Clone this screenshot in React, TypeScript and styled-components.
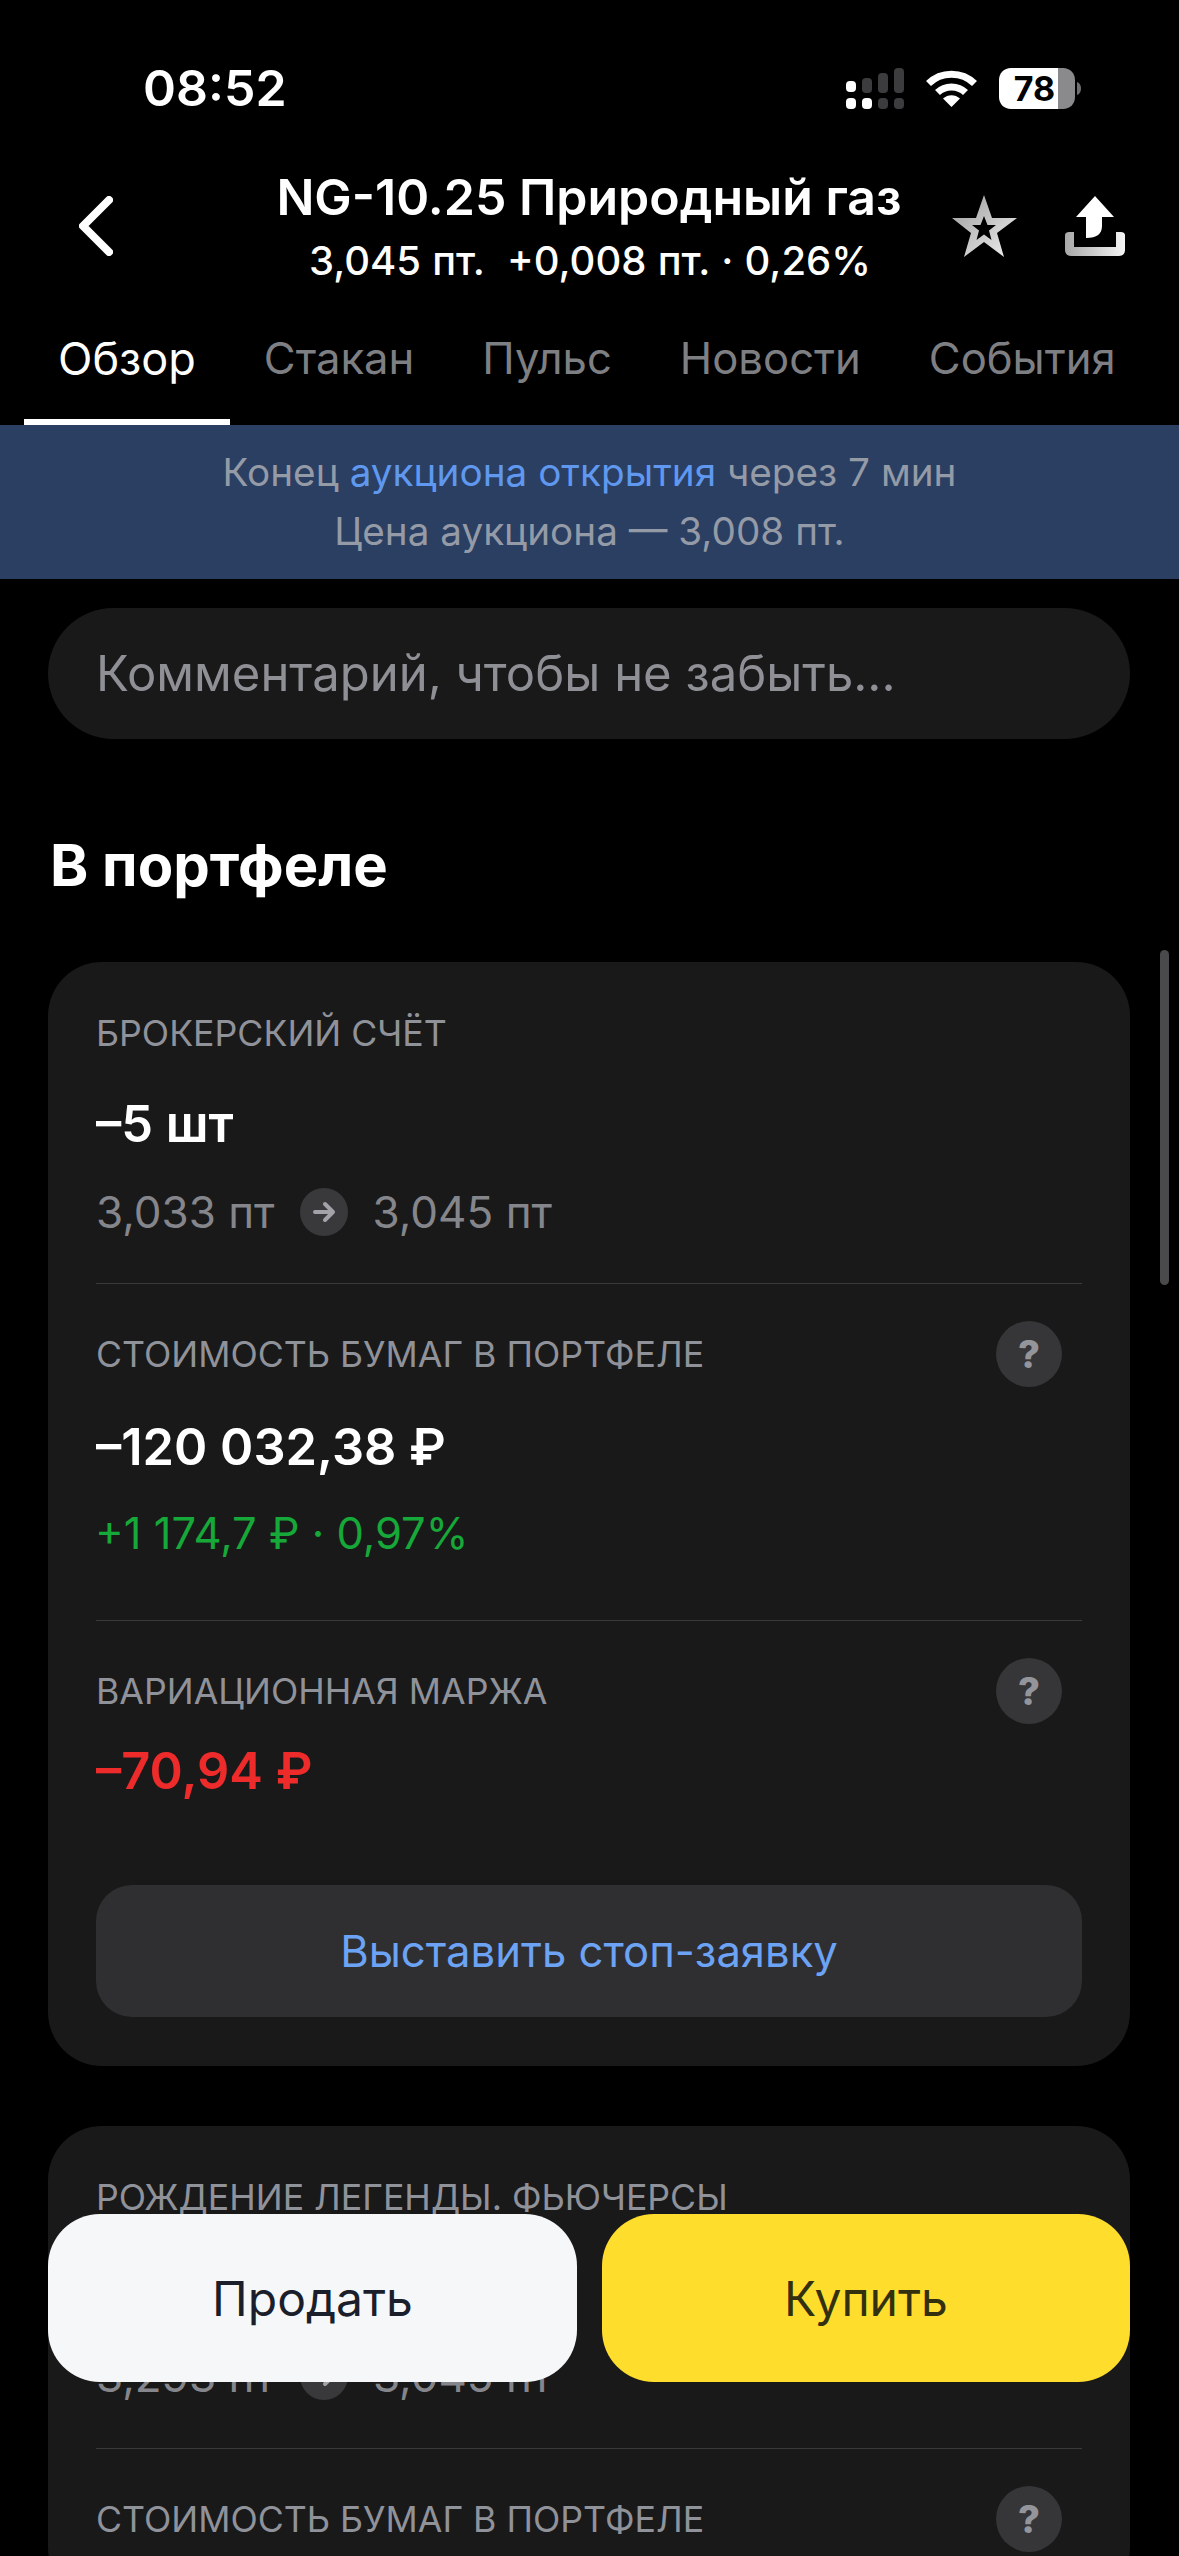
import React from "react";
import styled, { createGlobalStyle } from "styled-components";

const GlobalStyle = createGlobalStyle`
  html, body {
    margin: 0;
    padding: 0;
    background: #000;
  }
  * {
    box-sizing: border-box;
  }
`;

const Screen = styled.div`
  position: relative;
  width: 1179px;
  height: 2556px;
  overflow: hidden;
  background: #000;
  color: #fff;
  font-family: Inter, "Noto Sans", sans-serif;
`;

const StatusBar = styled.div`
  height: 148px;
  padding: 28px 98px 0 143px;
  display: flex;
  align-items: center;
  justify-content: space-between;
`;

const Time = styled.div`
  font-size: 50px;
  font-weight: 600;
`;

const StatusIcons = styled.div`
  display: flex;
  align-items: center;
  gap: 22px;
`;

const Header = styled.div`
  height: 150px;
  display: flex;
  align-items: center;
  padding: 6px 0 0 79px;
`;

const TitleBlock = styled.div`
  width: 700px;
  margin-left: 126px;
  display: flex;
  flex-direction: column;
  align-items: center;
  gap: 15px;
`;

const Title = styled.div`
  font-size: 50px;
  font-weight: 600;
  line-height: 54px;
  white-space: nowrap;
`;

const Quote = styled.div`
  font-size: 40px;
  font-weight: 500;
  line-height: 44px;
  white-space: pre;
  word-spacing: 0.6px;
  padding-left: 2px;
`;

const HeaderActions = styled.div`
  display: flex;
  align-items: center;
  gap: 47px;
  margin-left: 13px;
`;

const Tabs = styled.div`
  height: 127px;
  display: flex;
  align-items: flex-start;
  padding-left: 24px;
`;

const Tab = styled.div<{ $active?: boolean }>`
  height: 127px;
  padding: 36px 34px 0;
  font-size: ${(p) => (p.$active ? 45 : 43.6)}px;
  line-height: 50px;
  color: ${(p) => (p.$active ? "#fff" : "#7e7f83")};
  border-bottom: ${(p) => (p.$active ? "6px solid #fff" : "none")};
  white-space: nowrap;
`;

const Banner = styled.div`
  height: 154px;
  padding-bottom: 2px;
  background: #2a3f62;
  display: flex;
  flex-direction: column;
  align-items: center;
  justify-content: center;
  gap: 15px;
  font-size: 38.7px;
  line-height: 44px;
  color: #949aa6;
`;

const BannerLink = styled.span`
  color: #5f98ee;
`;

const Content = styled.div`
  padding: 29px 49px 0 48px;
`;

const CommentField = styled.div`
  height: 131px;
  border-radius: 66px;
  background: #19191a;
  padding: 0 48px;
  display: flex;
  align-items: center;
  font-size: 49px;
  color: #8f9095;
`;

const SectionTitle = styled.h2`
  margin: 92px 0 0 2px;
  height: 131px;
  font-size: 58px;
  line-height: 68px;
  font-weight: 700;
`;

const Card = styled.div`
  background: #19191a;
  border-radius: 54px;
  padding: 0 48px 49px;
  margin-bottom: 60px;
`;

const Block = styled.div<{ $divided?: boolean; $paddingBottom?: number }>`
  padding-top: ${(p) => (p.$divided ? 37 : 38)}px;
  padding-bottom: ${(p) => p.$paddingBottom ?? 0}px;
  border-top: ${(p) => (p.$divided ? "1.5px solid #3a3a3c" : "none")};
`;

const LabelRow = styled.div`
  height: 66px;
  display: flex;
  align-items: center;
  justify-content: space-between;
  padding-right: 20px;
`;

const Label = styled.div`
  font-size: 35.7px;
  color: #90929a;
  white-space: nowrap;
`;

const HelpBadge = styled.div`
  width: 66px;
  height: 66px;
  border-radius: 50%;
  background: #363639;
  color: #94959b;
  font-size: 38px;
  font-weight: 800;
  display: flex;
  align-items: center;
  justify-content: center;
`;

const Amount = styled.div<{ $color?: string; $marginTop?: number }>`
  margin-top: ${(p) => p.$marginTop ?? 29}px;
  height: 60px;
  font-size: 50.5px;
  line-height: 60px;
  font-weight: 600;
  color: ${(p) => p.$color || "#fff"};
`;

const SubLine = styled.div<{ $color?: string }>`
  margin-top: 28px;
  font-size: 44px;
  line-height: 60px;
  color: ${(p) => p.$color || "#85868b"};
  display: flex;
  align-items: center;
  gap: 25px;
`;

const GainLine = styled(SubLine)`
  margin-top: 26px;
  margin-left: -1px;
  font-size: 43.5px;
`;

const ArrowBadge = styled.span`
  width: 48px;
  height: 48px;
  border-radius: 50%;
  background: #39393c;
  display: flex;
  align-items: center;
  justify-content: center;
`;

const StopButton = styled.div`
  margin-top: 84px;
  height: 132px;
  border-radius: 36px;
  background: #2f2f31;
  color: #6ca3f5;
  font-size: 43.6px;
  display: flex;
  align-items: center;
  justify-content: center;
`;

const ActionBar = styled.div`
  position: absolute;
  left: 48px;
  right: 49px;
  top: 2214px;
  display: grid;
  grid-template-columns: 529px 528px;
  gap: 25px;
`;

const ActionButton = styled.div<{ $bg: string; $fg: string }>`
  height: 168px;
  border-radius: 52px;
  background: ${(p) => p.$bg};
  color: ${(p) => p.$fg};
  font-size: 48px;
  display: flex;
  align-items: center;
  justify-content: center;
`;

const ScrollThumb = styled.div`
  position: absolute;
  left: 1160px;
  top: 950px;
  width: 9px;
  height: 335px;
  border-radius: 5px;
  background: #4a4a4c;
`;

const SignalIcon = () => (
  <svg width="58" height="41" viewBox="0 0 58 41" fill="#fff">
    <rect x="0" y="13" width="10" height="11" rx="4" />
    <rect x="0" y="30" width="10" height="11" rx="4" />
    <rect x="16" y="30" width="10" height="11" rx="4" />
    <g fill="#3c3c3e">
      <rect x="16" y="10" width="10" height="15" rx="4" />
      <rect x="32" y="5" width="10" height="20" rx="4" />
      <rect x="48" y="0" width="10" height="25" rx="4" />
      <rect x="32" y="30" width="10" height="11" rx="4" />
      <rect x="48" y="30" width="10" height="11" rx="4" />
    </g>
  </svg>
);

const WifiIcon = () => (
  <svg width="51" height="37" viewBox="0 0 51 37" fill="none" stroke="#fff" strokeWidth="7">
    <path d="M2.5 13.5C15 1 36 1 48.5 13.5" />
    <path d="M11.5 22.5C19 15 32 15 39.5 22.5" />
    <path d="M17 28.5L25.5 37L34 28.5C29 24 22 24 17 28.5Z" fill="#fff" stroke="none" />
  </svg>
);

const BatteryIcon = () => (
  <svg width="82" height="41" viewBox="0 0 82 41">
    <path d="M59 0H64C71 0 76 5 76 12V29C76 36 71 41 64 41H59Z" fill="#8a8a8c" />
    <path d="M59 0H12C5 0 0 5 0 12V29C0 36 5 41 12 41H59Z" fill="#fff" />
    <path d="M78 14C81 15 82 18 82 20.5C82 23 81 26 78 27Z" fill="#6f6f71" />
    <text x="35.5" y="33" textAnchor="middle" fontFamily="Inter, sans-serif" fontSize="34" fontWeight="700" fill="#000">78</text>
  </svg>
);

const BackIcon = () => (
  <svg width="34" height="60" viewBox="0 0 34 60" fill="none" stroke="#fff" strokeWidth="8" strokeLinecap="round" strokeLinejoin="round">
    <path d="M30 4L4 30L30 56" />
  </svg>
);

const StarIcon = () => (
  <svg width="66" height="62" viewBox="0 0 66 62">
    <defs>
      <linearGradient id="starFill" x1="0" y1="0" x2="1" y2="1">
        <stop offset="0" stopColor="#9a9a9a" />
        <stop offset="1" stopColor="#f2f2f2" />
      </linearGradient>
    </defs>
    <path
      fillRule="evenodd"
      fill="url(#starFill)"
      d="M32 0L40 23H65L45 38L52 62L32 47L12 62L19 38L0 23H24ZM32 21L28.5 30H20L27 35.5L24.5 45L32 39.5L39.5 45L37 35.5L44 30H35.5Z"
    />
  </svg>
);

const ShareIcon = () => (
  <svg width="60" height="60" viewBox="0 0 60 60">
    <defs>
      <linearGradient id="trayFill" x1="0" y1="0" x2="1" y2="0">
        <stop offset="0" stopColor="#a8a8a8" />
        <stop offset="1" stopColor="#f5f5f5" />
      </linearGradient>
    </defs>
    <path d="M30 0L49 21H37V30C37 38 32 42 21 42V21H11Z" fill="#fff" />
    <path
      d="M0 39C0 37 2 36 4 36H9V51H51V36H56C58 36 60 37 60 39V54C60 57 58 60 54 60H6C2 60 0 57 0 54Z"
      fill="url(#trayFill)"
    />
  </svg>
);

const ArrowIcon = () => (
  <svg width="24" height="22" viewBox="0 0 24 22" fill="none" stroke="#a2a3a8" strokeWidth="4" strokeLinecap="round" strokeLinejoin="round">
    <path d="M3 11H21M13 3L21 11L13 19" />
  </svg>
);

const AccountHead = ({ title }: { title: string }) => (
  <LabelRow>
    <Label>{title}</Label>
  </LabelRow>
);

const HelpHead = ({ title }: { title: string }) => (
  <LabelRow>
    <Label>{title}</Label>
    <HelpBadge>?</HelpBadge>
  </LabelRow>
);

const PositionLine = ({ from, to }: { from: string; to: string }) => (
  <SubLine>
    <span>{from}</span>
    <ArrowBadge>
      <ArrowIcon />
    </ArrowBadge>
    <span>{to}</span>
  </SubLine>
);

export default function App() {
  return (
    <Screen>
      <GlobalStyle />
      <StatusBar>
        <Time>08:52</Time>
        <StatusIcons>
          <SignalIcon />
          <WifiIcon />
          <BatteryIcon />
        </StatusIcons>
      </StatusBar>

      <Header>
        <BackIcon />
        <TitleBlock>
          <Title>NG-10.25 Природный газ</Title>
          <Quote>3,045 пт.  +0,008 пт. · 0,26%</Quote>
        </TitleBlock>
        <HeaderActions>
          <StarIcon />
          <ShareIcon />
        </HeaderActions>
      </Header>

      <Tabs>
        <Tab $active>Обзор</Tab>
        <Tab>Стакан</Tab>
        <Tab>Пульс</Tab>
        <Tab>Новости</Tab>
        <Tab>События</Tab>
      </Tabs>

      <Banner>
        <div>
          Конец <BannerLink>аукциона открытия</BannerLink> через 7 мин
        </div>
        <div>Цена аукциона — 3,008 пт.</div>
      </Banner>

      <Content>
        <CommentField>Комментарий, чтобы не забыть...</CommentField>
        <SectionTitle>В портфеле</SectionTitle>

        <Card>
          <Block $paddingBottom={41}>
            <AccountHead title="БРОКЕРСКИЙ СЧЁТ" />
            <Amount $marginTop={28}>–5 шт</Amount>
            <PositionLine from="3,033 пт" to="3,045 пт" />
          </Block>
          <Block $divided $paddingBottom={57}>
            <HelpHead title="СТОИМОСТЬ БУМАГ В ПОРТФЕЛЕ" />
            <Amount $marginTop={30}>–120 032,38 ₽</Amount>
            <GainLine $color="#16a838">+1 174,7 ₽ · 0,97%</GainLine>
          </Block>
          <Block $divided>
            <HelpHead title="ВАРИАЦИОННАЯ МАРЖА" />
            <Amount $color="#ee2b2b" $marginTop={17}>–70,94 ₽</Amount>
          </Block>
          <StopButton>Выставить стоп-заявку</StopButton>
        </Card>

        <Card>
          <Block $paddingBottom={42}>
            <AccountHead title="РОЖДЕНИЕ ЛЕГЕНДЫ. ФЬЮЧЕРСЫ" />
            {/* the amount row here sits behind the action buttons */}
            <Amount $marginTop={28} />
            <PositionLine from="3,293 пт" to="3,045 пт" />
          </Block>
          <Block $divided>
            <HelpHead title="СТОИМОСТЬ БУМАГ В ПОРТФЕЛЕ" />
          </Block>
        </Card>
      </Content>

      <ScrollThumb />

      <ActionBar>
        <ActionButton $bg="#f6f7f9" $fg="#1b1f2b">Продать</ActionButton>
        <ActionButton $bg="#ffdd2d" $fg="#33300f">Купить</ActionButton>
      </ActionBar>
    </Screen>
  );
}
